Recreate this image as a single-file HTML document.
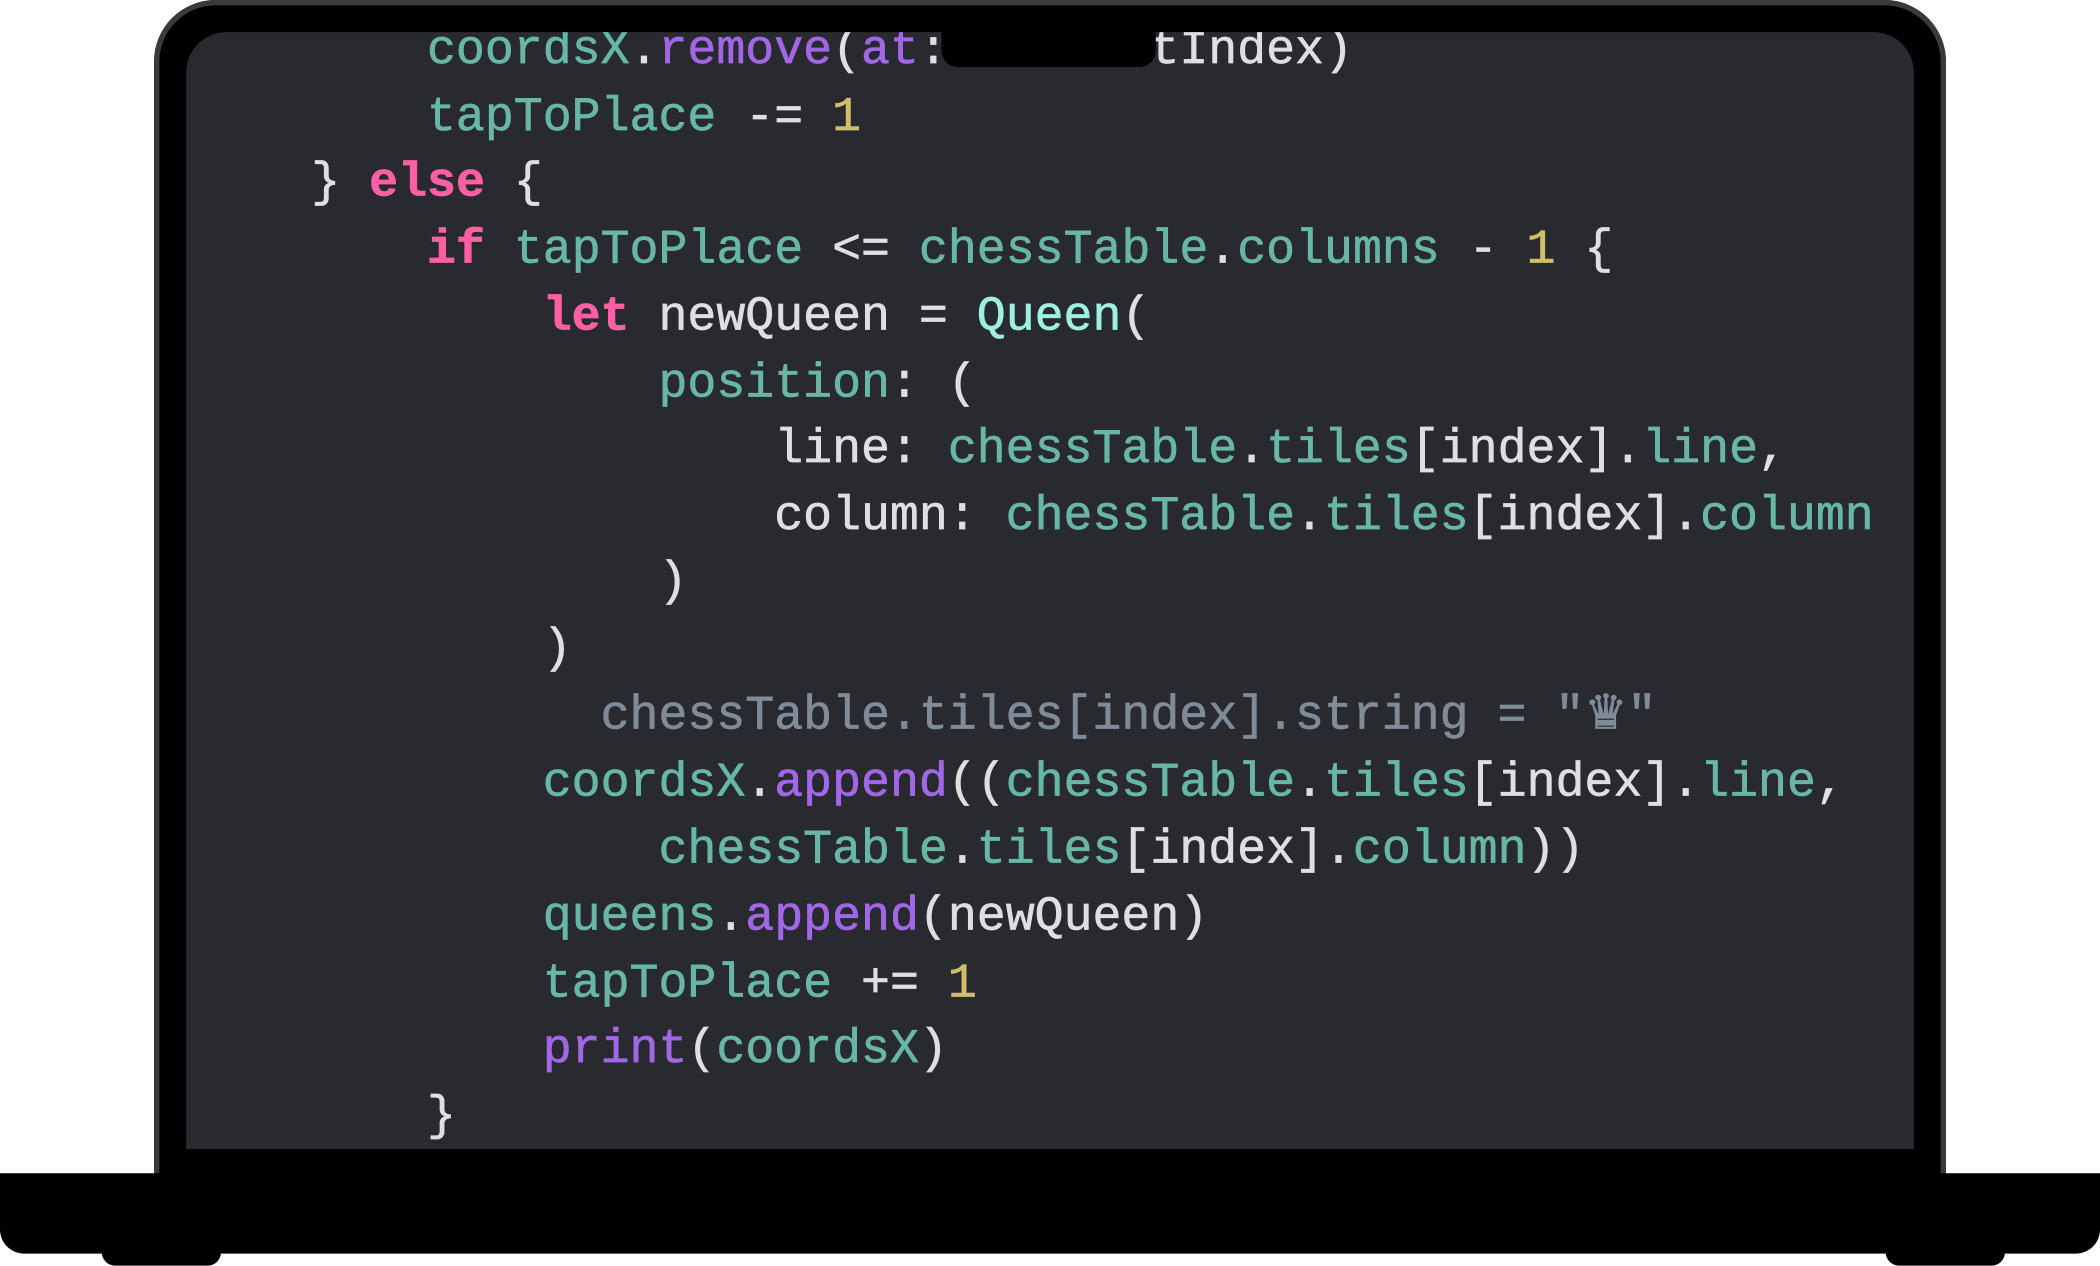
<!DOCTYPE html>
<html><head><meta charset="utf-8"><style>
html,body{margin:0;padding:0;background:#fff;width:2100px;height:1265px;overflow:hidden}
#w{position:absolute;left:0;top:0;width:1568px;height:945px;transform:scale(1.33929);transform-origin:0 0}
.lid{position:absolute;left:115px;top:0;width:1338px;height:900px;background:#000;border-radius:46px 46px 0 0;box-shadow:inset 0 0 0 4px #3b3a39}
.scr{position:absolute;left:139px;top:24px;width:1290px;height:834px;background:#292a30;border-radius:30px 30px 0 0;overflow:hidden}
.notch{position:absolute;left:703px;top:20px;width:160px;height:30px;background:#000;border-radius:0 0 12px 12px}
.base{position:absolute;left:0;top:876px;width:1568px;height:60px;background:#000;border-radius:0 0 18px 18px}
.foot{position:absolute;top:930px;width:89px;height:15px;background:#000;border-radius:0 0 10px 10px}
.l{position:absolute;left:7px;height:50px;line-height:50px;font-family:"Liberation Mono",monospace;font-size:36px;color:#dfdfe0;white-space:pre;-webkit-text-stroke:0.5px currentColor}
.t{color:#67b7a4}.p{color:#a167e6}.k{color:#fc5fa3;font-weight:bold}.n{color:#d0bf69}.q{color:#9ef1dd}.g{color:#7f8c98}
</style></head><body><div id="w">
<div class="lid"></div>
<div class="scr">
<div class="l" style="top:-11px">        <span class="t">coordsX</span>.<span class="p">remove</span>(<span class="p">at</span>: currentIndex)</div>
<div class="l" style="top:39px">        <span class="t">tapToPlace</span> -= <span class="n">1</span></div>
<div class="l" style="top:88px">    } <span class="k">else</span> {</div>
<div class="l" style="top:138px">        <span class="k">if</span> <span class="t">tapToPlace</span> &lt;= <span class="t">chessTable</span>.<span class="t">columns</span> - <span class="n">1</span> {</div>
<div class="l" style="top:188px">            <span class="k">let</span> newQueen = <span class="q">Queen</span>(</div>
<div class="l" style="top:238px">                <span class="t">position</span>: (</div>
<div class="l" style="top:287px">                    line: <span class="t">chessTable</span>.<span class="t">tiles</span>[index].<span class="t">line</span>,</div>
<div class="l" style="top:337px">                    column: <span class="t">chessTable</span>.<span class="t">tiles</span>[index].<span class="t">column</span></div>
<div class="l" style="top:386px">                )</div>
<div class="l" style="top:436px">            )</div>
<div class="l g" style="top:486px">              chessTable.tiles[index].string = "♛"</div>
<div class="l" style="top:536px">            <span class="t">coordsX</span>.<span class="p">append</span>((<span class="t">chessTable</span>.<span class="t">tiles</span>[index].<span class="t">line</span>,</div>
<div class="l" style="top:586px">                <span class="t">chessTable</span>.<span class="t">tiles</span>[index].<span class="t">column</span>))</div>
<div class="l" style="top:636px">            <span class="t">queens</span>.<span class="p">append</span>(newQueen)</div>
<div class="l" style="top:686px">            <span class="t">tapToPlace</span> += <span class="n">1</span></div>
<div class="l" style="top:735px">            <span class="p">print</span>(<span class="t">coordsX</span>)</div>
<div class="l" style="top:785px">        }</div>
</div>
<div class="notch"></div>
<div class="base"></div>
<div class="foot" style="left:76px"></div>
<div class="foot" style="left:1408px"></div>
</div></body></html>
